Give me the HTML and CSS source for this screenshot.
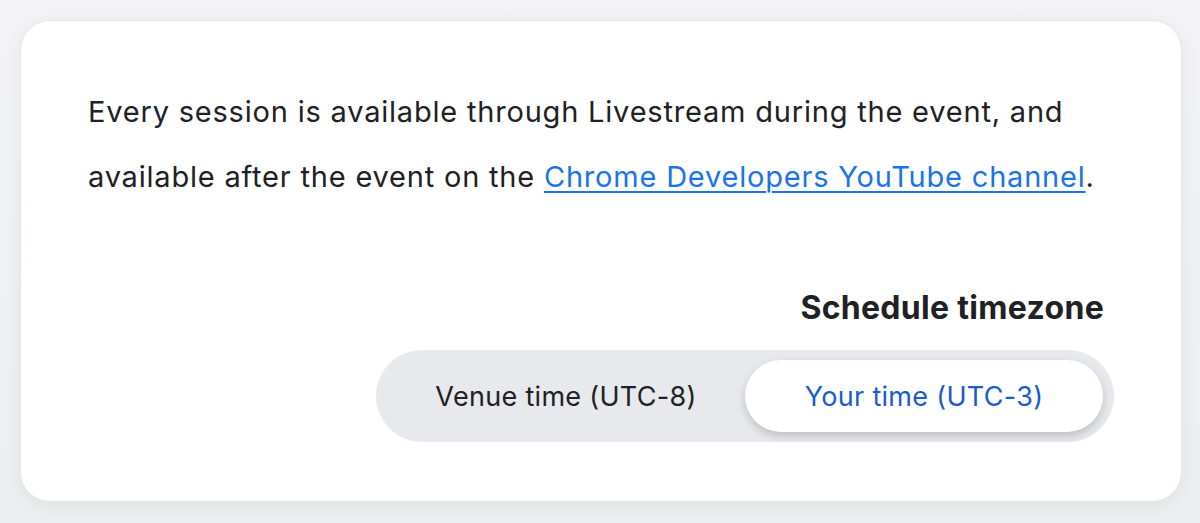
FILE: index.html
```html
<!DOCTYPE html>
<html lang="en">
<head>
<meta charset="utf-8">
<title>Schedule timezone</title>
<link rel="stylesheet" href="styles.css">
</head>
<body>
<main class="card">
  <p class="intro">Every session is available through Livestream during the event, and available after the event on the <a class="link" href="#">Chrome Developers YouTube channel</a>.</p>
  <section class="tz">
    <h2 class="tz-title">Schedule timezone</h2>
    <div class="toggle">
      <button class="opt">Venue time (UTC-8)</button>
      <button class="opt opt-active">Your time (UTC-3)</button>
    </div>
  </section>
</main>
</body>
</html>
```
FILE: styles.css
```css
html, body {
  margin: 0;
  height: 100%;
}
body {
  background: linear-gradient(#f3f3f5, #eceef0);
  padding: 20px 18px 21px 20px;
  box-sizing: border-box;
  font-family: Inter, "Noto Sans", sans-serif;
  color: #202124;
}
.card {
  background: #fff;
  border: 1px solid #e6e7ea;
  border-radius: 30px;
  box-shadow: 0 4px 18px rgba(0,0,0,0.06);
  padding: 58px 67px 59px 67px;
  height: 100%;
  box-sizing: border-box;
  display: flex;
  flex-direction: column;
}
.intro {
  margin: 0;
  font-size: 29px;
  line-height: 65px;
  letter-spacing: 0.8px;
}
.link {
  color: #1a73e8;
  text-decoration: underline;
  text-underline-offset: 4px;
  text-decoration-thickness: 2px;
}
.tz {
  margin-top: auto;
  display: flex;
  flex-direction: column;
  align-items: flex-end;
}
.tz-title {
  margin: 0 10px 22px 0;
  font-size: 32px;
  font-weight: 700;
  line-height: 40px;
  letter-spacing: 0.3px;
}
.toggle {
  display: flex;
  background: #e8e9ec;
  border-radius: 46px;
  padding: 10px 11px;
}
.opt {
  width: 358px;
  height: 72px;
  border: 0;
  border-radius: 36px;
  background: transparent;
  font-family: Inter, "Noto Sans", sans-serif;
  font-size: 27px;
  letter-spacing: 0.3px;
  color: #202124;
  padding: 0;
}
.opt-active {
  background: #fff;
  color: #1a5cc8;
  box-shadow: 0 4px 8px rgba(0,0,0,0.18);
}
```
